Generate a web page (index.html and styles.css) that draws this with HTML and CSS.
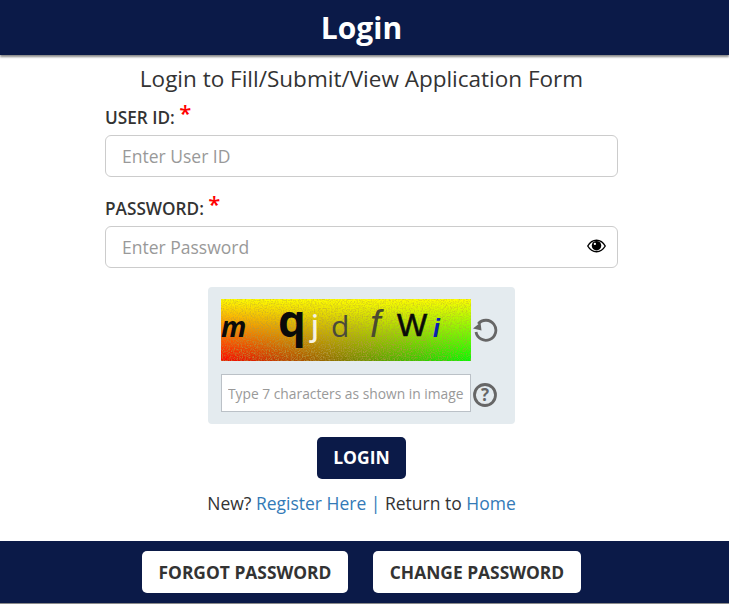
FILE: index.html
```html
<!DOCTYPE html>
<html lang="en">
<head>
<meta charset="utf-8">
<title>Login</title>
<link rel="stylesheet" href="styles.css">
</head>
<body>
<header class="top-bar"><h1>Login</h1></header>
<main class="content">
  <h2 class="subtitle">Login to Fill/Submit/View Application Form</h2>
  <form class="login-form">
    <div class="field">
      <label class="field-label" for="uid">USER ID: <span class="req">*</span></label>
      <input class="text-input" id="uid" type="text" placeholder="Enter User ID">
    </div>
    <div class="field">
      <label class="field-label" for="pwd">PASSWORD: <span class="req">*</span></label>
      <div class="password-wrap">
        <input class="text-input" id="pwd" type="password" placeholder="Enter Password">
        <svg class="eye" viewBox="0 0 20 14" aria-hidden="true">
          <path d="M0.8 7C3 3.2 6.2 1 10 1s7 2.2 9.2 6c-2.2 3.800-5.400 6-9.200 6S3 10.800 0.800 7z" fill="#fff" stroke="#000" stroke-width="1.500"/>
          <circle cx="10" cy="6.700" r="5" fill="#000"/>
          <circle cx="8.300" cy="4.800" r="1.200" fill="#fff"/>
        </svg>
      </div>
    </div>
    <div class="captcha-row">
      <div class="captcha-box">
        <svg class="captcha-img" viewBox="0 0 250 62" role="img" aria-label="captcha">
          <defs>
            <linearGradient id="rg"><stop offset="0" stop-color="#ff0000"/><stop offset="1" stop-color="#00ff00"/></linearGradient>
            <linearGradient id="yl" x2="0" y2="1"><stop offset="0" stop-color="#ffff00"/><stop offset="1" stop-color="#ffff00" stop-opacity="0"/></linearGradient>
            <radialGradient id="fade" cx="0.45" cy="0.8" r="0.7"><stop offset="0" stop-color="#fff"/><stop offset="1" stop-color="#777"/></radialGradient>
            <mask id="noise-mask"><rect width="250" height="62" fill="url(#fade)"/></mask>
            <filter id="noise" x="0" y="0" width="100%" height="100%">
              <feTurbulence type="fractalNoise" baseFrequency="0.75" numOctaves="2" seed="4"/>
              <feColorMatrix values="0 0 0 0 0.45  0 0 0 0 0.32  0 0 0 0 0.05  2.800 0 0 0 -1.150"/>
            </filter>
          </defs>
          <rect width="250" height="62" fill="url(#rg)"/>
          <rect width="250" height="62" fill="url(#yl)"/>
          <g mask="url(#noise-mask)"><rect width="250" height="62" filter="url(#noise)"/></g>
          <text class="c c-m" x="0" y="38">m</text>
          <text class="c c-q" x="57" y="38">q</text>
          <text class="c c-j" x="90" y="37">j</text>
          <text class="c c-d" x="110" y="38">d</text>
          <text class="c c-f" x="149" y="38">f</text>
          <text class="c c-w" x="176" y="37">W</text>
          <text class="c c-i" x="212" y="38">i</text>
        </svg>
        <svg class="side-icon" viewBox="0 0 26 26" aria-hidden="true">
          <path d="M6.200 6.800A10 10 0 1 1 4 15" fill="none" stroke="#666" stroke-width="2.800"/>
          <path d="M1 11.500L8.500 5.500l1 8z" fill="#666"/>
        </svg>
        <input class="captcha-input" type="text" placeholder="Type 7 characters as shown in image">
        <svg class="side-icon side-icon-low" viewBox="0 0 26 26" aria-hidden="true">
          <circle cx="13" cy="13" r="10.500" fill="none" stroke="#666" stroke-width="2.800"/>
          <text class="q-mark" x="13" y="18.500">?</text>
        </svg>
      </div>
    </div>
    <div class="submit-row"><button class="btn-primary" type="button">LOGIN</button></div>
    <p class="links">New? <a class="link" href="#">Register Here</a> <span class="link">|</span> Return to <a class="link" href="#">Home</a></p>
  </form>
</main>
<footer class="bottom-bar">
  <button class="btn-light btn-forgot" type="button">FORGOT PASSWORD</button>
  <button class="btn-light btn-change" type="button">CHANGE PASSWORD</button>
</footer>
</body>
</html>
```
FILE: styles.css
```css
* { box-sizing: border-box; }
html, body { margin: 0; padding: 0; }
body {
  height: 604px;
  overflow: hidden;
  background: #fff;
  color: #333;
  font-family: "Open Sans", "Liberation Sans", sans-serif;
  display: flex;
  flex-direction: column;
}
.top-bar {
  height: 55px;
  flex: none;
  padding-right: 6px;
  background: #0b1a48;
  box-shadow: 0 2px 2px #888;
  display: flex;
  align-items: center;
  justify-content: center;
}
.top-bar h1 {
  margin: 0;
  color: #fff;
  font-size: 30px;
  font-weight: 700;
  line-height: 55px;
}
.content { flex: 1; padding: 9px 6px 0 0; }
.subtitle {
  margin: 0;
  text-align: center;
  font-size: 22.500px;
  font-weight: 400;
  line-height: 30px;
}
.login-form { width: 513px; margin: 0 auto; }
.field { margin-top: 9px; }
.field + .field { margin-top: 17px; }
.field-label {
  display: block;
  height: 32px;
  padding-top: 4px;
  font-size: 17.200px;
  font-weight: 600;
  line-height: 22px;
}
.req { color: #f00; font-size: 22px; line-height: 16px; position: relative; top: -3px; }
.text-input {
  display: block;
  width: 100%;
  height: 42px;
  padding: 0 16px;
  border: 1px solid #ccc;
  border-radius: 6px;
  background: #fff;
  color: #333;
  font: 400 17.500px "Open Sans", "Liberation Sans", sans-serif;
}
.text-input::placeholder { color: #999; opacity: 1; }
.password-wrap { position: relative; }
.eye { position: absolute; right: 12px; top: 13px; width: 19px; height: 14px; }
.captcha-row { display: flex; justify-content: center; margin-top: 19px; }
.captcha-box {
  width: 307px;
  height: 137px;
  padding: 12px 0 0 13px;
  background: #e4ebef;
  border-radius: 4px;
  display: grid;
  grid-template-columns: 250px 26px;
  grid-template-rows: 62px 38px;
  column-gap: 1px;
  row-gap: 13px;
  align-items: center;
}
.captcha-img { display: block; width: 250px; height: 62px; overflow: visible; }
.c { font-family: "Open Sans", "Liberation Sans", sans-serif; }
.c-m { font-size: 28px; font-style: italic; font-weight: 700; fill: #0a0a0a; }
.c-q { font-size: 44px; font-weight: 700; fill: #0a0a0a; }
.c-j { font-size: 28px; font-weight: 600; fill: #f6f2e4; }
.c-d { font-size: 30px; fill: #4a4a3a; }
.c-f { font: italic 400 38px "Liberation Sans", sans-serif; fill: #4a4a30; }
.c-w { font: 400 32px "Liberation Sans", sans-serif; fill: #0a0a0a; stroke: #0a0a0a; stroke-width: .6px; }
.c-i { font: italic 700 25px "Liberation Sans", sans-serif; fill: #0a20b0; }
.side-icon { display: block; width: 26px; height: 26px; }
.side-icon-low { margin-top: 4px; }
.q-mark { font: 700 17px "Open Sans", sans-serif; fill: #666; text-anchor: middle; }
.captcha-input {
  width: 250px;
  height: 38px;
  padding: 1px 6px 0;
  border: 1px solid #bbc1c7;
  background: #fff;
  font: 400 13.800px "Open Sans", "Liberation Sans", sans-serif;
}
.captcha-input::placeholder { color: #999; opacity: 1; }
.submit-row { display: flex; justify-content: center; margin-top: 13px; }
.btn-primary {
  width: 89px;
  height: 42px;
  padding: 0 0 2px;
  border: 0;
  border-radius: 5px;
  background: #0b1a48;
  color: #fff;
  font: 700 17.500px "Open Sans", "Liberation Sans", sans-serif;
}
.links {
  margin: 12px 0 0;
  text-align: center;
  font-size: 17.500px;
  line-height: 24px;
}
.link { color: #337ab7; text-decoration: none; }
.bottom-bar {
  height: 62px;
  flex: none;
  margin-bottom: 1px;
  padding: 10px 6px 0 0;
  background: #0b1a48;
  box-shadow: 0 1px 0 #8a8a8a;
  display: flex;
  justify-content: center;
  align-items: flex-start;
  gap: 25px;
}
.btn-light {
  height: 42px;
  padding: 0;
  border: 0;
  border-radius: 5px;
  background: #fff;
  color: #333;
  font: 700 17.400px "Open Sans", "Liberation Sans", sans-serif;
}
.btn-forgot { width: 206px; }
.btn-change { width: 208px; }
```
